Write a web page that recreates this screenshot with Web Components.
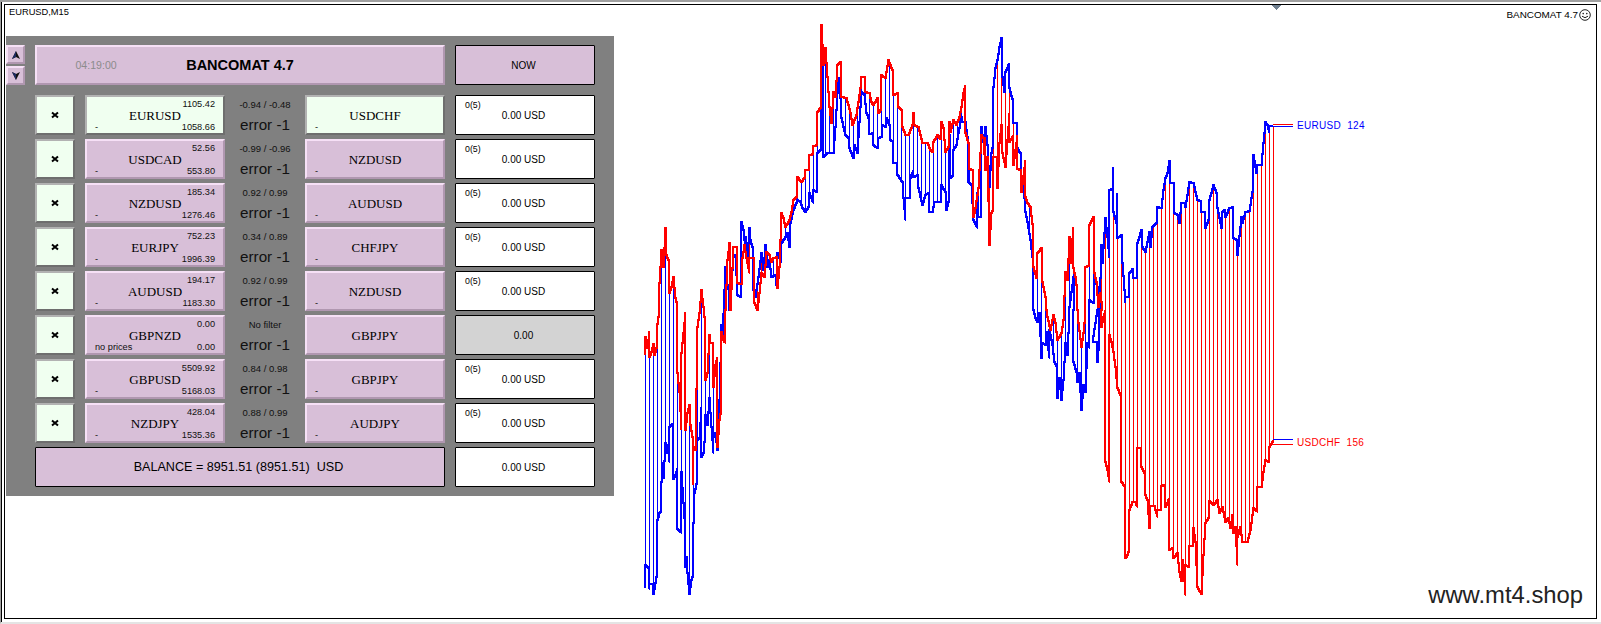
<!DOCTYPE html>
<html>
<head>
<meta charset="utf-8">
<title>BANCOMAT 4.7</title>
<style>
html, body { margin: 0; padding: 0; background: #fff; overflow: hidden; }
</style>
</head>
<body>
<chart-window caption="EURUSD,M15">
    <ea-panel slot="panel">
        <pair-row left="EURUSD" right="USDCHF" hi="1105.42" lo="1058.66" filter="-0.94 / -0.48" on></pair-row>
        <pair-row left="USDCAD" right="NZDUSD" hi="52.56" lo="553.80" filter="-0.99 / -0.96"></pair-row>
        <pair-row left="NZDUSD" right="AUDUSD" hi="185.34" lo="1276.46" filter="0.92 / 0.99"></pair-row>
        <pair-row left="EURJPY" right="CHFJPY" hi="752.23" lo="1996.39" filter="0.34 / 0.89"></pair-row>
        <pair-row left="AUDUSD" right="NZDUSD" hi="194.17" lo="1183.30" filter="0.92 / 0.99"></pair-row>
        <pair-row left="GBPNZD" right="GBPJPY" hi="0.00" lo="0.00" filter="No filter" note="no prices" idle></pair-row>
        <pair-row left="GBPUSD" right="GBPJPY" hi="5509.92" lo="5168.03" filter="0.84 / 0.98"></pair-row>
        <pair-row left="NZDJPY" right="AUDJPY" hi="428.04" lo="1535.36" filter="0.88 / 0.99"></pair-row>
    </ea-panel>
    <spread-chart slot="chart"></spread-chart>
</chart-window>

<script>
const sans = `"Liberation Sans", Arial, sans-serif`
const serif = `"Liberation Serif", "Times New Roman", serif`

class ChartWindow extends HTMLElement {
    constructor() {
        super()
        this._shadowRoot = this.attachShadow({mode : 'open'})
    }
    connectedCallback(){
        this._shadowRoot.innerHTML = `
        <style>
        :host { display: block; box-sizing: border-box; width: 1601px; height: 624px; background: #fff;
            border-top: 2px solid #a0a0a0; border-left: 1px solid #a0a0a0; border-bottom: 2px solid #e4e4e4;
            font-family: ${sans}; color: #000; }
        .edge { box-sizing: border-box; height: 100%; border-left: 1px solid #000; padding: 2px 4px 3px 2px; }
        .view { box-sizing: border-box; height: 100%; border: 1px solid #000; display: flex; }
        .side { width: 609px; flex: none; }
        .title { height: 31px; box-sizing: border-box; padding: 1px 0 0 4px; font-size: 9.3px; line-height: 13px; }
        .main { flex: 1; min-width: 0; }
        </style>
        <div class="edge">
            <div class="view">
                <div class="side">
                    <div class="title">${this.getAttribute('caption')}</div>
                    <slot name="panel"></slot>
                </div>
                <div class="main"><slot name="chart"></slot></div>
            </div>
        </div>
        `
    }
}

class EaPanel extends HTMLElement {
    constructor() {
        super()
        this._shadowRoot = this.attachShadow({mode : 'open'})
    }
    connectedCallback(){
        this._shadowRoot.innerHTML = `
        <style>
        :host { display: block; box-sizing: border-box; width: 608px; height: 460px; margin-left: 1px; background: #808080; padding-top: 9px; }
        .head { display: flex; margin-bottom: 10px; height: 40px; }
        .arrows { width: 19px; margin-right: 10px; display: flex; flex-direction: column; justify-content: space-between; }
        .arrows bevel-button { height: 19px; }
        .title { width: 410px; margin-right: 10px; display: grid; grid-template-columns: 1fr auto 1fr; align-items: center; }
        .time { font-size: 10.6px; color: #8c8c8c; text-align: center; padding-right: 6px; margin-left: -25px; }
        .name { font-size: 14.5px; font-weight: bold; }
        .rows { display: flex; flex-direction: column; gap: 4px; }
        .foot { display: flex; margin: 4px 0 0 29px; height: 40px; }
        .foot flat-cell:first-child { width: 410px; margin-right: 10px; font-size: 12.6px; }
        .foot span { white-space: pre; }
        flat-cell { width: 140px; font-size: 10px; }
        svg { display: block; }
        </style>
        <div class="head">
            <div class="arrows">
                <bevel-button><svg width="8" height="8" viewBox="0 0 8 8"><path d="M4 0 L8 8 L4 6 L0 8 Z" fill="#111"/><path d="M4 0 L4 6 L0 8 Z" fill="#1c2a60"/></svg></bevel-button>
                <bevel-button><svg width="8" height="8" viewBox="0 0 8 8"><path d="M4 8 L8 0 L4 2 L0 0 Z" fill="#111"/><path d="M4 8 L4 2 L0 0 Z" fill="#1c2a60"/></svg></bevel-button>
            </div>
            <bevel-button class="title">
                <span class="time">04:19:00</span>
                <span class="name">BANCOMAT 4.7</span>
                <span></span>
            </bevel-button>
            <flat-cell fill="#d8bfd8">NOW</flat-cell>
        </div>
        <div class="rows"><slot></slot></div>
        <div class="foot">
            <flat-cell fill="#d8bfd8"><span>BALANCE = 8951.51 (8951.51)  USD</span></flat-cell>
            <flat-cell fill="#fff">0.00 USD</flat-cell>
        </div>
        `
    }
}

class BevelButton extends HTMLElement {
    constructor() {
        super()
        this._shadowRoot = this.attachShadow({mode : 'open'})
    }
    connectedCallback(){
        this._shadowRoot.innerHTML = `
        <style>
        :host { display: flex; align-items: center; justify-content: center; box-sizing: border-box;
            background: #d8bfd8; border: 2px solid; border-color: #f6e0f6 #b097b0 #b097b0 #f6e0f6; }
        :host([on]) { background: #f0fff0; border-color: #b2b2b2 #6e6e6e #6e6e6e #b2b2b2; }
        </style>
        <slot></slot>
        `
    }
}

class FlatCell extends HTMLElement {
    constructor() {
        super()
        this._shadowRoot = this.attachShadow({mode : 'open'})
    }
    connectedCallback(){
        this._shadowRoot.innerHTML = `
        <style>
        :host { display: flex; align-items: center; justify-content: center; box-sizing: border-box; height: 40px;
            border: 1px solid #000; border-radius: 1px; padding-right: 3px; background: ${this.getAttribute('fill')}; }
        </style>
        <slot></slot>
        `
    }
}

class PairRow extends HTMLElement {
    constructor() {
        super()
        this._shadowRoot = this.attachShadow({mode : 'open'})
    }
    connectedCallback(){
        const a = (name) => this.getAttribute(name) || ''
        const on = this.hasAttribute('on') ? 'on' : ''
        const idle = this.hasAttribute('idle')
        const pairLeft = `
            <span class="hi">${a('hi')}</span>
            <span class="sym">${a('left')}</span>
            <span class="bot"><span>${a('note') || '-'}</span><span>${a('lo')}</span></span>`
        const pairRight = `
            <span class="hi"></span>
            <span class="sym">${a('right')}</span>
            <span class="bot"><span>${idle ? '' : '-'}</span></span>`
        const cell = idle
            ? `<flat-cell fill="#d3d3d3">0.00</flat-cell>`
            : `<flat-cell fill="#fff"><span class="order"><span class="count">0(5)</span><span>0.00 USD</span></span></flat-cell>`
        this._shadowRoot.innerHTML = `
        <style>
        :host { display: grid; grid-template-columns: 40px 150px 80px 140px 150px; margin-left: 29px; height: 40px; }
        .pair { margin-left: 10px; }
        .pair.second { margin-left: 0; }
        .grid { display: grid; grid-template-rows: 11px 11px 12px; width: 100%; height: 36px; box-sizing: border-box;
            padding: 2px 8px 0; font-size: 9.2px; line-height: 11px; color: #111; }
        .hi { text-align: right; }
        .sym { font-family: ${serif}; font-size: 13px; line-height: 11px; text-align: center; color: #000; }
        .bot { display: flex; justify-content: space-between; padding-top: 1px; }
        .mid { display: flex; flex-direction: column; align-items: center; font-size: 9.5px; color: #111; }
        .filter { line-height: 11px; padding-top: 4px; height: 16px; box-sizing: border-box; }
        .err { font-size: 15.2px; line-height: 20px; padding-top: 4px; }
        flat-cell { margin-left: 10px; width: 140px; font-size: 10px; }
        .order { display: block; width: 100%; height: 38px; position: relative; text-align: center; line-height: 40px; }
        .count { position: absolute; left: 9px; top: 4px; font-size: 8.8px; line-height: 11px; }
        svg { display: block; }
        </style>
        <bevel-button class="close" on>
            <svg width="8" height="8" viewBox="0 0 8 8"><path d="M1 1.5 L7 6.5 M7 1.5 L1 6.5" stroke="#000" stroke-width="2" fill="none"/></svg>
        </bevel-button>
        <bevel-button class="pair" ${on}><span class="grid">${pairLeft}</span></bevel-button>
        <div class="mid"><span class="filter">${a('filter')}</span><span class="err">error -1</span></div>
        <bevel-button class="pair second" ${on}><span class="grid">${pairRight}</span></bevel-button>
        ${cell}
        `
    }
}

// traced from the chart, each part is [origin x, origin y, points at 3x]
const redTrace = [
    [630, 310, [44,135, 44,82, 50,115, 56,62, 56,140, 62,125, 68,103, 72,135, 78,115, 80,42, 86,0]],
    [630, 10, [87,820, 92,720, 96,755, 100,770, 104,655, 108,735, 114,750, 118,850, 124,830, 130,800, 134,865, 140,885]],
    [630, 310, [140,0, 140,190, 146,245, 152,360, 152,130, 156,100, 160,70, 164,5, 165,360, 172,310, 176,285, 180,345, 186,380, 188,525, 190,410, 196,420, 200,50, 206,10]],
    [630, 10, [212,840, 218,890]],
    [630, 310, [224,50, 224,210, 232,190, 236,75, 240,100, 248,100, 250,230, 254,165, 260,140, 262,410, 268,330, 272,290, 272,65, 280,90, 285,100]],
    [630, 10, [285,900, 290,750, 296,700, 300,900, 308,710, 320,712, 322,820, 332,822, 335,745, 342,705, 348,745, 356,790, 356,745, 368,745, 372,880, 380,900, 386,850, 392,790, 402,800, 408,725, 418,735, 424,755, 430,745, 440,740, 442,835, 446,770, 452,610, 460,625, 466,650, 476,630, 482,605, 490,570, 498,562, 500,500, 512,515, 522,505, 526,480, 536,480, 538,435, 548,432, 550,408, 560,406, 562,305, 570,295, 574,45, 578,165, 584,115, 590,200, 596,290, 604,340, 610,245, 614,260, 620,165, 630,155, 634,260, 648,265, 654,285, 660,310, 666,345, 678,315, 690,235, 692,200, 704,202, 706,245, 716,250, 724,275, 730,285, 740,265, 744,310, 750,300, 752,195, 765,205, 775,150, 785,180, 790,255, 800,250, 804,290, 812,300, 816,350, 825,375, 835,375, 845,345, 849,310, 852,345, 865,350, 875,400, 890,398, 900,420, 906,425, 910,395, 920,375, 930,388, 934,335, 940,355, 946,425, 956,405, 958,335]],
    [950, 10, [0,365, 8,330, 18,345, 28,320, 34,290, 40,250, 45,225, 45,370, 55,400, 58,478, 70,480, 70,620, 76,595, 85,535, 92,375, 100,385, 106,480, 112,440, 116,705, 122,610, 128,595, 130,440, 142,440, 142,535, 148,400, 152,345, 155,430, 165,470, 176,310, 176,395, 188,375, 188,465, 200,375, 202,478, 212,480, 212,545, 224,450, 224,560, 232,580, 240,590, 248,670, 248,770, 258,805, 262,730, 272,715, 276,815, 284,860, 288,900]],
    [950, 310, [290,20, 300,60, 310,15, 316,40, 322,90, 332,70, 340,30]],
    [950, 10, [344,785, 350,810, 356,680, 360,760, 368,650, 368,775, 375,800, 380,850, 382,900]],
    [950, 310, [384,40, 394,110, 400,70, 405,10]],
    [950, 10, [405,900, 405,770, 415,768, 416,645, 428,620, 432,790, 438,815, 444,890, 450,850, 456,900]],
    [950, 310, [452,50, 460,20, 465,0, 465,455, 470,480, 477,515, 477,75, 484,95, 490,125, 496,170, 502,235, 510,255, 513,515, 524,530, 524,745, 530,735, 536,715, 538,600, 546,575, 556,575, 560,590, 562,415, 572,415, 574,470, 582,490, 586,555, 592,570, 596,655, 600,588, 612,588, 620,620, 620,600, 632,600, 634,528, 644,522, 646,590, 656,565, 656,720, 668,712, 670,745, 680,730, 686,785, 692,812, 696,750, 702,812, 705,855, 705,765, 716,770, 718,708, 728,708, 730,655, 736,695, 740,830, 752,852, 760,735, 765,640, 775,625, 778,572, 790,585, 802,570, 806,610, 816,590, 826,635, 834,625, 840,655, 846,615, 850,670, 856,650, 860,765, 862,680, 870,650, 875,695, 890,695, 900,660, 908,595, 920,605, 922,530, 932,530, 938,485, 946,450, 956,455, 958,410, 970,390]]
]
const blueTrace = [
    [630, 310, [44,835, 44,765, 54,775, 56,838, 58,822, 68,822, 68,852, 74,820, 78,800, 80,630, 86,610, 92,600, 92,515, 96,460, 100,505, 104,400, 110,430, 114,405, 116,455, 116,350, 128,338, 128,508, 136,495, 140,475, 140,658, 152,670, 152,485, 158,580, 162,625, 164,770, 168,740, 172,790, 176,852, 182,810, 188,790, 188,640, 192,550, 200,510, 200,390, 208,385, 212,290, 212,440, 218,430, 222,395, 226,315, 232,345, 236,265, 242,350, 248,430, 248,380, 256,368, 260,420, 264,340, 268,270, 272,45, 276,80]],
    [630, 10, [284,770, 290,825, 296,850, 296,900, 300,855, 308,740, 316,735, 320,855, 332,862, 332,635, 338,660, 344,720, 346,680, 352,745, 356,655, 360,690, 366,710, 370,840, 376,860, 384,800, 392,730, 398,780, 404,705, 410,770, 418,750, 424,800, 434,795, 438,825, 442,730, 452,755, 452,700, 465,680, 472,670, 476,710, 480,640, 490,600, 500,570, 510,575, 516,595, 524,605, 536,585, 538,550, 548,580, 550,540, 560,545, 562,430, 570,420, 575,160, 580,440, 590,430, 600,430, 610,430, 614,350, 620,250, 626,205, 632,325, 645,375, 655,385, 658,415, 668,445, 672,405, 680,430, 685,380, 692,245, 702,255, 708,310, 716,330, 718,372, 728,370, 730,405, 740,415, 745,385, 752,380, 755,345, 765,350, 768,325, 776,345, 780,390, 790,395, 790,458, 800,460, 802,495, 815,515, 820,565, 825,630, 825,565, 836,565, 840,505, 848,480, 850,500, 860,495, 865,535, 875,585, 885,555, 895,548, 897,605, 907,605, 912,575, 930,575, 934,525, 944,545, 948,600, 955,575, 958,375]],
    [950, 10, [0,505, 8,495, 8,420, 18,405, 24,370, 34,320, 36,335, 45,335, 50,380, 55,515, 62,525, 70,630, 80,655, 82,550, 84,620, 92,620, 92,350, 100,395, 105,350, 112,405, 118,530, 122,430, 128,400, 130,230, 136,175, 140,150, 146,110, 152,85, 155,200, 162,245, 166,185, 176,160, 178,235, 188,280, 190,340, 200,340, 200,415, 212,435, 214,530, 220,520, 224,605, 232,635, 240,690, 245,740, 248,900]],
    [950, 310, [248,0, 256,25, 262,35, 266,10, 272,145, 276,100, 284,105, 288,65, 290,95, 298,145, 298,60, 305,105, 312,155, 320,175, 322,265, 328,205, 332,270, 340,210, 346,100, 352,135, 356,0]],
    [950, 10, [358,890, 370,800, 372,900]],
    [950, 310, [368,60, 370,155, 378,185, 382,215, 388,190, 394,300, 400,225, 404,245, 410,100, 418,115, 418,0]],
    [950, 10, [416,870, 428,880, 432,800, 440,830, 445,900]],
    [950, 310, [430,95, 440,95, 440,155, 446,80, 446,0]],
    [950, 10, [452,705, 456,760, 464,625, 470,680, 476,745, 476,540, 486,536, 490,470, 490,605, 498,640, 502,550, 502,685, 512,675, 516,760, 524,880, 526,860, 536,860, 538,790, 548,775, 550,805, 560,805, 562,700, 572,660, 576,710, 585,725, 596,665, 600,710, 606,650, 618,640, 622,590, 632,595, 640,540, 646,505, 652,490, 656,452, 660,518, 670,520, 672,608, 680,615, 686,640, 694,580, 704,578, 706,590, 716,515, 730,518, 740,570, 752,572, 754,605, 764,605, 766,655, 776,620, 778,570, 788,525, 798,548, 802,595, 812,655, 816,605, 826,597, 826,620, 838,595, 850,590, 850,685, 858,690, 862,735, 872,620, 875,640, 886,605, 896,602, 905,545, 910,435, 918,490, 922,465, 932,465, 940,400, 946,335, 952,345, 958,370, 958,348, 968,348]]
]

function toPoints(trace) {
    const out = []
    trace.forEach(([ox, oy, p]) => {
        for (let i = 0; i < p.length; i += 2) out.push([Math.round(ox + p[i] / 3), Math.round(oy + p[i + 1] / 3)])
    })
    return out
}
function yAt(points, x) {
    for (let i = 1; i < points.length; i++) {
        const [x0, y0] = points[i - 1]
        const [x1, y1] = points[i]
        if (x0 <= x && x <= x1 && x1 > x0) return y0 + (y1 - y0) * (x - x0) / (x1 - x0)
    }
    return points[points.length - 1][1]
}
// every sloped piece becomes 1px stairs, that is how the terminal draws its lines
function stairs(points) {
    let d = `M${points[0][0]} ${points[0][1]}`
    for (let i = 1; i < points.length; i++) {
        const [x0, y0] = points[i - 1]
        const [x1, y1] = points[i]
        const dx = Math.abs(x1 - x0)
        const dir = x1 > x0 ? 1 : -1
        for (let k = 1; k <= dx; k++) {
            d += `V${Math.round(y0 + (y1 - y0) * (k - 1) / dx)}H${x0 + dir * k}`
        }
        d += `V${y1}`
    }
    return d
}

class SpreadChart extends HTMLElement {
    constructor() {
        super()
        this._shadowRoot = this.attachShadow({mode : 'open'})
    }
    connectedCallback(){
        const red = toPoints(redTrace)
        const blue = toPoints(blueTrace)
        let bars = ''
        for (let x = 645; x <= 1273; x += 4) {
            const r = Math.round(yAt(red, x))
            const b = Math.round(yAt(blue, x))
            const color = r > b ? '#f00' : '#00f'
            bars += `<rect x="${x}" y="${Math.min(r, b)}" width="1" height="${Math.abs(r - b) + 1}" fill="${color}"/>`
        }
        this._shadowRoot.innerHTML = `
        <style>
        :host { display: block; position: relative; width: 100%; height: 613px; font-family: ${sans}; }
        svg.plot { display: block; width: 982px; height: 613px; }
        .line { fill: none; stroke-width: 2; shape-rendering: crispEdges; }
        text { font-family: ${sans}; font-size: 10px; letter-spacing: 0.3px; white-space: pre; }
        .brand { position: absolute; right: 5px; top: 3px; display: flex; align-items: center; gap: 1px; font-size: 9.9px; line-height: 13px; color: #000; }
        .site { position: absolute; right: 13px; bottom: 10px; font-size: 23.8px; line-height: 27px; color: #222; }
        </style>
        <svg class="plot" viewBox="614 5 982 613" shape-rendering="crispEdges">
            <path d="M1271 5 H1281 L1276 10 Z" fill="#708090"/>
            ${bars}
            <path class="line" d="${stairs(blue)}" stroke="#00f"/>
            <path class="line" d="${stairs(red)}" stroke="#f00"/>
            <rect x="1273" y="124" width="20" height="1" fill="#f00"/>
            <rect x="1273" y="126" width="20" height="1" fill="#00f"/>
            <rect x="1273" y="439" width="20" height="1" fill="#00f"/>
            <rect x="1273" y="444" width="20" height="1" fill="#f00"/>
            <text x="1297" y="129" fill="#00f">EURUSD  124</text>
            <text x="1297" y="446" fill="#f00">USDCHF  156</text>
        </svg>
        <div class="brand">BANCOMAT 4.7<svg width="12" height="12" viewBox="0 0 12 12"><circle cx="6" cy="6" r="5.3" fill="none" stroke="#222"/><circle cx="4.2" cy="4.6" r=".8" fill="#222"/><circle cx="7.8" cy="4.6" r=".8" fill="#222"/><path d="M3 7.2 Q6 10.2 9 7.2" fill="none" stroke="#222"/></svg></div>
        <div class="site">www.mt4.shop</div>
        `
    }
}

window.customElements.define('chart-window', ChartWindow)
window.customElements.define('ea-panel', EaPanel)
window.customElements.define('bevel-button', BevelButton)
window.customElements.define('flat-cell', FlatCell)
window.customElements.define('pair-row', PairRow)
window.customElements.define('spread-chart', SpreadChart)
</script>
</body>
</html>
